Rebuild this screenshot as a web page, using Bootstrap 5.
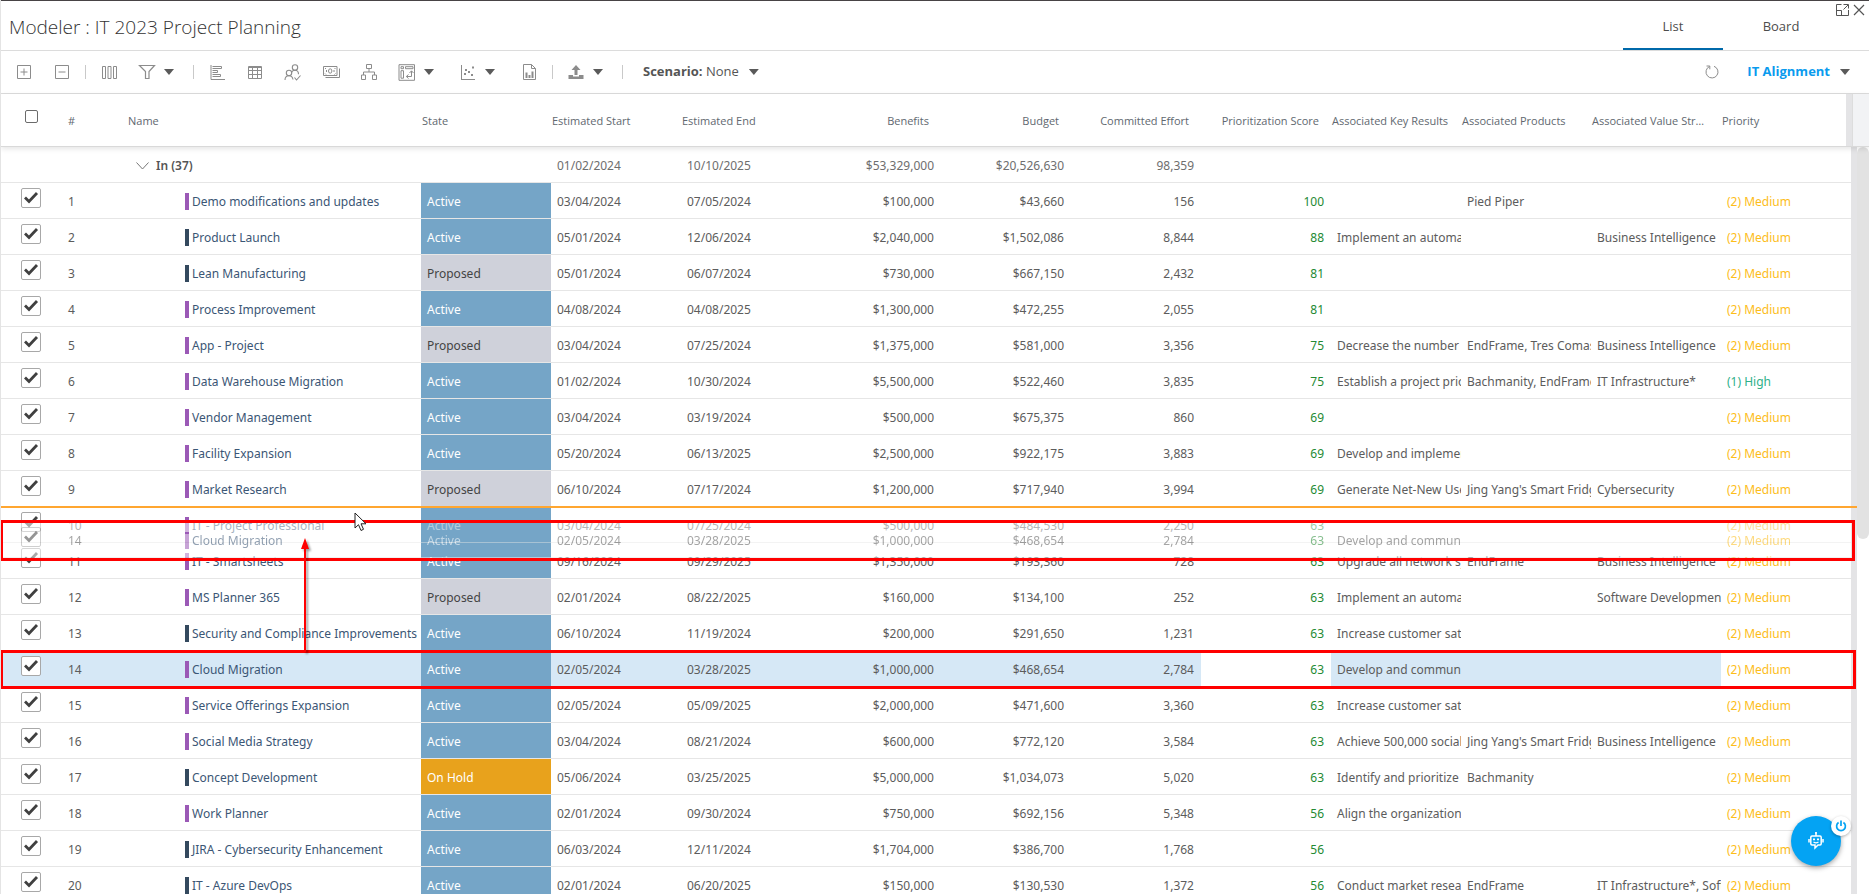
<!DOCTYPE html>
<html lang="en">
<head>
<meta charset="utf-8">
<meta name="viewport" content="width=device-width, initial-scale=1">
<title>Modeler : IT 2023 Project Planning</title>
<link href="https://cdn.jsdelivr.net/npm/bootstrap@5.3.0/dist/css/bootstrap.min.css" rel="stylesheet">
<style>
  :root { --line: #dcdcdc; --rowline: #e6e6e6; --ink: #5c5c5c; --icon: #8c8c8c; }
  body { font-family: "Open Sans", "Noto Sans", sans-serif; font-size: 12px; color: var(--ink); border-left: 1px solid #e4e4e4; background: #fff; }
  svg { display: block; flex: none; }

  .page-head { border-top: 1px solid #474345; border-bottom: 1px solid var(--line); height: 51px; padding-right: 38px; padding-left: 8px; }
  .page-title { font-size: 19px; font-weight: 300; line-height: 24px; color: #333; padding-top: 3px; }
  .view-tabs { gap: 8px; }
  .view-tabs .nav-link { width: 100px; height: 49px; padding: 4px 0 0; color: #4d4d4d; font-size: 13px; display: flex; align-items: center; justify-content: center; border-bottom: 2px solid transparent; border-radius: 0; }
  .view-tabs .nav-link.active { border-color: #0069aa; }
  .win-tools { top: 4px; right: 4px; gap: 4px; }
  .win-tools button, .tool { background: none; border: 0; padding: 0; color: var(--icon); }
  .win-tools button { color: #555; }

  .toolbar { height: 43px; border-bottom: 1px solid var(--line); padding-left: 4px; padding-right: 19px; }
  .tool { width: 38px; height: 32px; display: flex; align-items: center; justify-content: center; }
  .tool-menu { width: 61px; gap: 8px; justify-content: flex-start; padding-left: 10px; }
  .tool-sep { width: 1px; height: 14px; margin: 0 4px; background: #c9c9c9; }
  .caret { width: 10px; height: 6px; background: #5a5a5a; clip-path: polygon(0 0, 100% 0, 50% 100%); }
  .text-menu { background: none; border: 0; padding: 0; font-size: 13px; color: #555; gap: 10px; }
  .scenario { margin-left: 16px; }
  .alignment { color: #0a9bee; font-weight: 700; }

  .grid-pane { min-width: 0; }
  .grid-table { table-layout: fixed; width: 100%; border-collapse: separate; border-spacing: 0; }
  .grid-table th, .grid-table td { white-space: nowrap; overflow: hidden; padding: 2px 0 0 6px; }
  .c-check { width: 60px; } .c-num { width: 60px; } .c-field { width: 130px; } .c-last { width: 125px; }

  .grid-head { border-bottom: 1px solid #d9d9d9; box-shadow: 0 2px 5px rgba(0,0,0,.1); z-index: 2; }
  .grid-head th { height: 52px; font-size: 11px; font-weight: 400; color: #61686f; padding: 2px 0 0 1px; vertical-align: middle; text-overflow: ellipsis; }
  .grid-head th:nth-child(1) { padding: 16px 0 0 24px; vertical-align: top; }
  .grid-head th:nth-child(2), .grid-head th:nth-child(3) { padding-left: 7px; }
  .grid-head th:nth-child(13) { padding-right: 16px; }
  .grid-head th.text-end { padding-right: 12px; }
  .band { width: 6px; background: #e4e4e6; }
  .head-fill { width: 17px; background: #f2f3f5; border-left: 1px solid #ddd; }
  .scroll-track { width: 12px; }
  .scroll-thumb { height: 392px; background: #e2e2e2; border-radius: 6px; }

  .grid-body { font-family: "Noto Sans", "Open Sans", sans-serif; }
  .grid-body td { height: 36px; line-height: 32px; border-bottom: 1px solid var(--rowline); }
  .grid-body td.text-end { padding-right: 7px; }
  .grid-body td:nth-child(1) { padding: 5px 0 0 20px; vertical-align: top; }
  .grid-body td:nth-child(2) { padding-left: 7px; }
  .grid-body td:nth-child(3) { padding-left: 64px; color: #3b5675; }
  .grid-body tr.group-row td:nth-child(3) { padding-left: 15px; font-weight: 600; color: #555; }
  .grid-body tr.group-row td { color: #6e6e6e; }
  .toggle { background: none; border: 0; padding: 0; font-weight: inherit; color: inherit; gap: 7px; line-height: 32px; }
  .bar { width: 4px; height: 17px; margin-right: 3px; }
  .bar-p { background: #9b59b6; } .bar-d { background: #34495e; }
  .grid-body td.st-a { background: #75a5c7; color: #fff; }
  .grid-body td.st-p { background: #cfd1da; color: #444; }
  .grid-body td.st-h { background: #e8a21c; color: #fff; }
  .grid-body td.score { color: #248a33; }
  .grid-body td.pr-2 { color: #fdbd1a; } .grid-body td.pr-1 { color: #2fb089; }
  .grid-body tr.picked td:not(.score):not(.pr-2):not(.st-a) { background: #d6e8f6; }
  .grid-body a { color: inherit; text-decoration: none; }

  .tick-row, .tick-all { appearance: none; display: block; margin: 0; background: #fff; }
  .tick-row { width: 20px; height: 20px; border: 1px solid #a8a8a8; border-radius: 2px; }
  .tick-row:checked { background: url("data:image/svg+xml,%3Csvg xmlns='http://www.w3.org/2000/svg' viewBox='0 0 18 18'%3E%3Cpath d='M3 8.600 L7 12.500 L15 4' fill='none' stroke='%23404040' stroke-width='2.800'/%3E%3C/svg%3E") center / 18px 18px no-repeat #fff; }
  .tick-all { width: 13px; height: 13px; border: 1px solid #6b6b6b; border-radius: 2px; }

  /* drag and drop layer over the rows */
  .drop-line { top: 359px; left: 0; right: 12px; height: 2px; background: #ffa630; }
  .drag-ghost { top: 375px; left: 0; width: 100%; background: #fff; opacity: .55; }
  .note-box { left: -1px; border: 3px solid #f00; }
  .note-target { top: 373px; right: 14px; height: 41px; }
  .note-source { top: 503px; right: 13px; height: 39px; }
  .note-arrow { top: 391px; left: 297px; filter: drop-shadow(2px 2px 1px rgba(0,0,0,.4)); }
  .pointer { top: 365px; left: 353px; }

  .assist { right: 28px; bottom: 28px; z-index: 5; }
  .assist-main { width: 50px; height: 50px; background: #04a3f3; border: 0; color: #fff; box-shadow: 0 2px 5px rgba(0,0,0,.35); }
  .assist-power { top: 0; right: -10px; width: 20px; height: 20px; border: 0; padding: 0; background: #fff; color: #04a3f3; box-shadow: 0 1px 3px rgba(0,0,0,.3); }
</style>
</head>
<body class="vh-100 d-flex flex-column overflow-hidden position-relative">

<header class="page-head d-flex align-items-center justify-content-between flex-shrink-0">
  <h1 class="page-title mb-0">Modeler : IT 2023 Project Planning</h1>
  <nav class="nav view-tabs align-self-end">
    <a class="nav-link active" href="#list">List</a>
    <a class="nav-link" href="#board">Board</a>
  </nav>
  <div class="win-tools position-absolute d-flex">
    <button type="button" aria-label="Pop out"><svg width="13" height="12" viewBox="0 0 13 12" fill="none" stroke="currentColor"><path d="M5.500.5H.5v11h12V6M.5 6.500h5v5M7.500.5h5v4M12 1 7.500 5.500"/></svg></button>
    <button type="button" aria-label="Close"><svg width="12" height="12" viewBox="0 0 12 12" fill="none" stroke="currentColor" stroke-width="1.200"><path d="m1 1 10 10M11 1 1 11"/></svg></button>
  </div>
</header>

<div class="toolbar d-flex align-items-center flex-shrink-0" role="toolbar" aria-label="Grid tools">
  <button class="tool" type="button" aria-label="Expand all"><svg width="14" height="14" viewBox="0 0 14 14" fill="none" stroke="currentColor"><path d="M.5.5h13v13H.5zM7 3.500v7M3.500 7h7"/></svg></button>
  <button class="tool" type="button" aria-label="Collapse all"><svg width="14" height="14" viewBox="0 0 14 14" fill="none" stroke="currentColor"><path d="M.5.5h13v13H.5zM3.500 7h7"/></svg></button>
  <span class="tool-sep"></span>
  <button class="tool" type="button" aria-label="Columns"><svg width="15" height="13" viewBox="0 0 15 13" fill="none" stroke="currentColor"><path d="M.5.5h3v12h-3zM6 .5h3v12H6zM11.500.5h3v12h-3z"/></svg></button>
  <button class="tool tool-menu" type="button" aria-label="Filter"><svg width="18" height="16" viewBox="0 0 18 16" fill="none" stroke="currentColor" stroke-width="1.200"><path d="M1.500 1.500h15l-5.500 6v7H7.500v-7z"/></svg><span class="caret"></span></button>
  <span class="tool-sep"></span>
  <button class="tool" type="button" aria-label="Gantt"><svg width="15" height="15" viewBox="0 0 15 15" fill="none" stroke="currentColor"><path d="M1 0v14.500h14M2.500 1.500h9v2h-9M2.500 5.500h5v2h-5M2.500 9.500h8v2h-8"/></svg></button>
  <button class="tool" type="button" aria-label="Table"><svg width="14" height="13" viewBox="0 0 14 13" fill="none" stroke="currentColor"><path d="M.5.5h13v12H.5zM.5 1.500h13M.5 4.500h13M.5 8.500h13M4.500 1v12M9.500 1v12"/></svg></button>
  <button class="tool" type="button" aria-label="Resources"><svg width="18" height="17" viewBox="0 0 18 17" fill="none" stroke="currentColor" stroke-width="1.100"><circle cx="11" cy="3.500" r="2.700"/><circle cx="5" cy="9" r="2.700"/><path d="M7.500 8.500C8 6.800 9.300 6.300 11 6.300c2.200 0 3.500 1.200 3.500 4M1 16c0-3 1.500-4.200 4-4.200S8.500 13 9 15.500M10.500 13.500l2 2.500 4-4.500"/></svg></button>
  <button class="tool" type="button" aria-label="Financials"><svg width="17" height="12" viewBox="0 0 17 12" fill="none" stroke="currentColor"><path d="M.5.5h13.500v9H.5zM2.500 11.500h14V2.500M2 3l1-1M12.500 3l-1-1M2 7.500l1 1M12.500 7.500l-1 1M3.500 4v2M11 4v2"/><ellipse cx="7.200" cy="5" rx="1.700" ry="2.200"/></svg></button>
  <button class="tool" type="button" aria-label="Hierarchy"><svg width="16" height="16" viewBox="0 0 16 16" fill="none" stroke="currentColor"><path d="M5.500.5h5v4h-5zM.5 11h4v4.500h-4zM11.500 11h4v4.500h-4zM8 4.500V8M2.500 11V8h11v3"/></svg></button>
  <button class="tool tool-menu" type="button" aria-label="Pivot"><svg width="18" height="17" viewBox="0 0 18 17" fill="none" stroke="currentColor"><path d="M1 .7h15.500v15.600H1zM3 2.700h2.500v2H3zM7.500 2.700H15v2H7.500zM3 6.700h2.500v7.500H3z"/><path d="M13.500 7v5.500h-5M11.500 9l2-2.200 2 2.200M10.500 10.500l-2.200 2 2.200 2"/></svg><span class="caret"></span></button>
  <button class="tool tool-menu" type="button" aria-label="Scatter chart"><svg width="18" height="15" viewBox="0 0 18 15" fill="currentColor"><path d="M2 0h1v14h13v1H2zM5 8h2v2H5zM6 4h2v2H6zM9 6h2v2H9zM13 1.500h2v2h-2zM12 9h2v2h-2z"/></svg><span class="caret"></span></button>
  <button class="tool" type="button" aria-label="Report"><svg width="13" height="16" viewBox="0 0 13 16" fill="none" stroke="currentColor"><path d="M.5.5h8l4 4v11H.5zM8.500.5v4h4"/><path stroke-width="2" d="M3.500 14V8.500M6.500 14v-3M9.500 14V7.500"/></svg></button>
  <span class="tool-sep"></span>
  <button class="tool tool-menu" type="button" aria-label="Export"><svg width="18" height="16" viewBox="0 0 18 16" fill="currentColor"><path d="M9 1l4.500 5h-3v5h-3V6h-3zM1.500 11H6v1.500h6V11h4.500v4h-15z"/></svg><span class="caret"></span></button>
  <span class="tool-sep"></span>
  <button class="text-menu scenario d-flex align-items-center" type="button"><span><b>Scenario:</b> None</span><span class="caret"></span></button>
  <button class="tool ms-auto me-3" type="button" aria-label="Refresh"><svg width="14" height="14" viewBox="0 0 14 14" fill="none" stroke="currentColor"><path d="M9 1.300a6 6 0 1 1-4.500.2M1.500 1h3.300v3.300"/></svg></button>
  <button class="text-menu d-flex align-items-center" type="button"><span class="alignment">IT Alignment</span><span class="caret"></span></button>
</div>

<div class="grid-head d-flex flex-shrink-0 position-relative">
  <div class="grid-pane flex-fill overflow-hidden">
    <table class="grid-table">
      <colgroup><col class="c-check"><col class="c-num"><col><col class="c-field"><col class="c-field"><col class="c-field"><col class="c-field"><col class="c-field"><col class="c-field"><col class="c-field"><col class="c-field"><col class="c-field"><col class="c-field"><col class="c-last"></colgroup>
      <thead><tr>
        <th><input class="tick-all" type="checkbox" aria-label="Select all"></th>
        <th>#</th><th>Name</th><th>State</th><th>Estimated Start</th><th>Estimated End</th>
        <th class="text-end">Benefits</th><th class="text-end">Budget</th><th class="text-end">Committed Effort</th><th class="text-end">Prioritization Score</th>
        <th>Associated Key Results</th><th>Associated Products</th><th>Associated Value Streams</th><th>Priority</th>
      </tr></thead>
    </table>
  </div>
  <div class="band flex-shrink-0"></div>
  <div class="head-fill flex-shrink-0"></div>
</div>

<main class="grid-body d-flex flex-grow-1 overflow-hidden position-relative">
  <div class="grid-pane flex-fill position-relative">
    <table class="grid-table">
      <colgroup id="cols"><col class="c-check"><col class="c-num"><col><col class="c-field"><col class="c-field"><col class="c-field"><col class="c-field"><col class="c-field"><col class="c-field"><col class="c-field"><col class="c-field"><col class="c-field"><col class="c-field"><col class="c-field"></colgroup>
      <tbody id="rows">
        <tr class="group-row">
          <td></td><td></td>
          <td><button class="toggle d-flex align-items-center" type="button"><svg width="13" height="8" viewBox="0 0 13 8" fill="none" stroke="#777"><path d="m.5.5 6 6.500 6-6.500"/></svg>In (37)</button></td>
          <td></td><td>01/02/2024</td><td>10/10/2025</td>
          <td class="text-end">$53,329,000</td><td class="text-end">$20,526,630</td><td class="text-end">98,359</td>
          <td></td><td></td><td></td><td></td><td></td>
        </tr>
      </tbody>
    </table>
    <table class="grid-table drag-ghost position-absolute" id="ghost"></table>
  </div>
  <div class="band flex-shrink-0"></div>
  <div class="scroll-track flex-shrink-0"><div class="scroll-thumb"></div></div>

  <div class="drop-line position-absolute"></div>
  <div class="note-box note-target position-absolute"></div>
  <div class="note-box note-source position-absolute"></div>
  <svg class="note-arrow position-absolute" width="14" height="114" viewBox="0 0 14 114"><path d="M7 114V8" stroke="#f00" stroke-width="2"/><path d="M7 0l4 11H3z" fill="#f00"/></svg>
  <svg class="pointer position-absolute" width="13" height="20" viewBox="0 0 13 20"><path d="M1 1v15l3.500-3.300L7 18.500l2.500-1.200-2.500-5.500h5z" fill="#fff" stroke="#222"/></svg>
</main>

<div class="assist position-absolute">
  <button class="assist-main rounded-circle d-flex align-items-center justify-content-center" type="button" aria-label="Assistant"><svg width="16" height="18" viewBox="0 0 16 18" fill="none" stroke="currentColor" stroke-width="1.500"><path d="M8 2v2M4 4h8q1.200 0 1.200 1.200v6.600q0 1.200-1.200 1.200h-2l-3 3v-3H4q-1.200 0-1.200-1.200V5.200Q2.800 4 4 4zM1 7v3.500M15 7v3.500"/><path d="M5.500 10q2.500 1.600 5 0" stroke-width="1.200"/><path d="M5 7.300h2M9 7.300h2M8 0v2" stroke-width="1.800"/></svg></button>
  <button class="assist-power rounded-circle position-absolute d-flex align-items-center justify-content-center" type="button" aria-label="Turn off assistant"><svg width="12" height="12" viewBox="0 0 12 12" fill="none" stroke="currentColor" stroke-width="1.700"><path d="M3.600 2.500a4.400 4.400 0 1 0 4.800 0M6 .5v5.500"/></svg></button>
</div>

<script>
  // number, bar, name, state, start, end, benefits, budget, effort, score, key results, products, value streams, priority
  const projects = [
    [1,"p","Demo modifications and updates","a","03/04/2024","07/05/2024","$100,000","$43,660","156",100,"","Pied Piper","",2],
    [2,"d","Product Launch","a","05/01/2024","12/06/2024","$2,040,000","$1,502,086","8,844",88,"Implement an automated","","Business Intelligence",2],
    [3,"d","Lean Manufacturing","p","05/01/2024","06/07/2024","$730,000","$667,150","2,432",81,"","","",2],
    [4,"p","Process Improvement","a","04/08/2024","04/08/2025","$1,300,000","$472,255","2,055",81,"","","",2],
    [5,"p","App - Project","p","03/04/2024","07/25/2024","$1,375,000","$581,000","3,356",75,"Decrease the number of","EndFrame, Tres Comas","Business Intelligence",2],
    [6,"p","Data Warehouse Migration","a","01/02/2024","10/30/2024","$5,500,000","$522,460","3,835",75,"Establish a project prioritization","Bachmanity, EndFrame","IT Infrastructure*",1],
    [7,"p","Vendor Management","a","03/04/2024","03/19/2024","$500,000","$675,375","860",69,"","","",2],
    [8,"p","Facility Expansion","a","05/20/2024","06/13/2025","$2,500,000","$922,175","3,883",69,"Develop and implement","","",2],
    [9,"p","Market Research","p","06/10/2024","07/17/2024","$1,200,000","$717,940","3,994",69,"Generate Net-New Users","Jing Yang's Smart Fridge","Cybersecurity",2],
    [10,"p","IT - Project Professional","a","03/04/2024","07/25/2024","$500,000","$484,530","2,250",63,"","","",2],
    [11,"p","IT - Smartsheets","a","09/16/2024","09/29/2025","$1,350,000","$193,360","728",63,"Upgrade all network systems","EndFrame","Business Intelligence",2],
    [12,"p","MS Planner 365","p","02/01/2024","08/22/2025","$160,000","$134,100","252",63,"Implement an automated","","Software Development",2],
    [13,"d","Security and Compliance Improvements","a","06/10/2024","11/19/2024","$200,000","$291,650","1,231",63,"Increase customer satisfaction","","",2],
    [14,"p","Cloud Migration","a","02/05/2024","03/28/2025","$1,000,000","$468,654","2,784",63,"Develop and communicate","","",2],
    [15,"p","Service Offerings Expansion","a","02/05/2024","05/09/2025","$2,000,000","$471,600","3,360",63,"Increase customer satisfaction","","",2],
    [16,"p","Social Media Strategy","a","03/04/2024","08/21/2024","$600,000","$772,120","3,584",63,"Achieve 500,000 social","Jing Yang's Smart Fridge","Business Intelligence",2],
    [17,"d","Concept Development","h","05/06/2024","03/25/2025","$5,000,000","$1,034,073","5,020",63,"Identify and prioritize","Bachmanity","",2],
    [18,"p","Work Planner","a","02/01/2024","09/30/2024","$750,000","$692,156","5,348",56,"Align the organization","","",2],
    [19,"d","JIRA - Cybersecurity Enhancement","a","06/03/2024","12/11/2024","$1,704,000","$386,700","1,768",56,"","","",2],
    [20,"d","IT - Azure DevOps","a","02/01/2024","06/20/2025","$150,000","$130,530","1,372",56,"Conduct market research","EndFrame","IT Infrastructure*, Software",2]
  ];
  const states = { a: "Active", p: "Proposed", h: "On Hold" };
  const priorities = { 1: "(1) High", 2: "(2) Medium" };
  const row = (p, cls) => `<tr class="${cls}">
    <td><input class="tick-row" type="checkbox" checked aria-label="Select ${p[2]}"></td>
    <td>${p[0]}</td>
    <td><div class="d-flex align-items-center"><span class="bar bar-${p[1]}"></span><a href="#p${p[0]}">${p[2]}</a></div></td>
    <td class="st-${p[3]}">${states[p[3]]}</td><td>${p[4]}</td><td>${p[5]}</td>
    <td class="text-end">${p[6]}</td><td class="text-end">${p[7]}</td><td class="text-end">${p[8]}</td>
    <td class="text-end score">${p[9]}</td><td>${p[10]}</td><td>${p[11]}</td><td>${p[12]}</td>
    <td class="pr-${p[13]}">${priorities[p[13]]}</td></tr>`;
  document.getElementById("rows").insertAdjacentHTML("beforeend",
    projects.map(p => row(p, p[0] === 14 ? "picked" : "")).join(""));
  document.getElementById("ghost").innerHTML =
    "<colgroup>" + document.getElementById("cols").innerHTML + "</colgroup><tbody>" + row(projects[13], "") + "</tbody>";
</script>
<script src="https://cdn.jsdelivr.net/npm/bootstrap@5.3.0/dist/js/bootstrap.bundle.min.js"></script>
</body>
</html>
